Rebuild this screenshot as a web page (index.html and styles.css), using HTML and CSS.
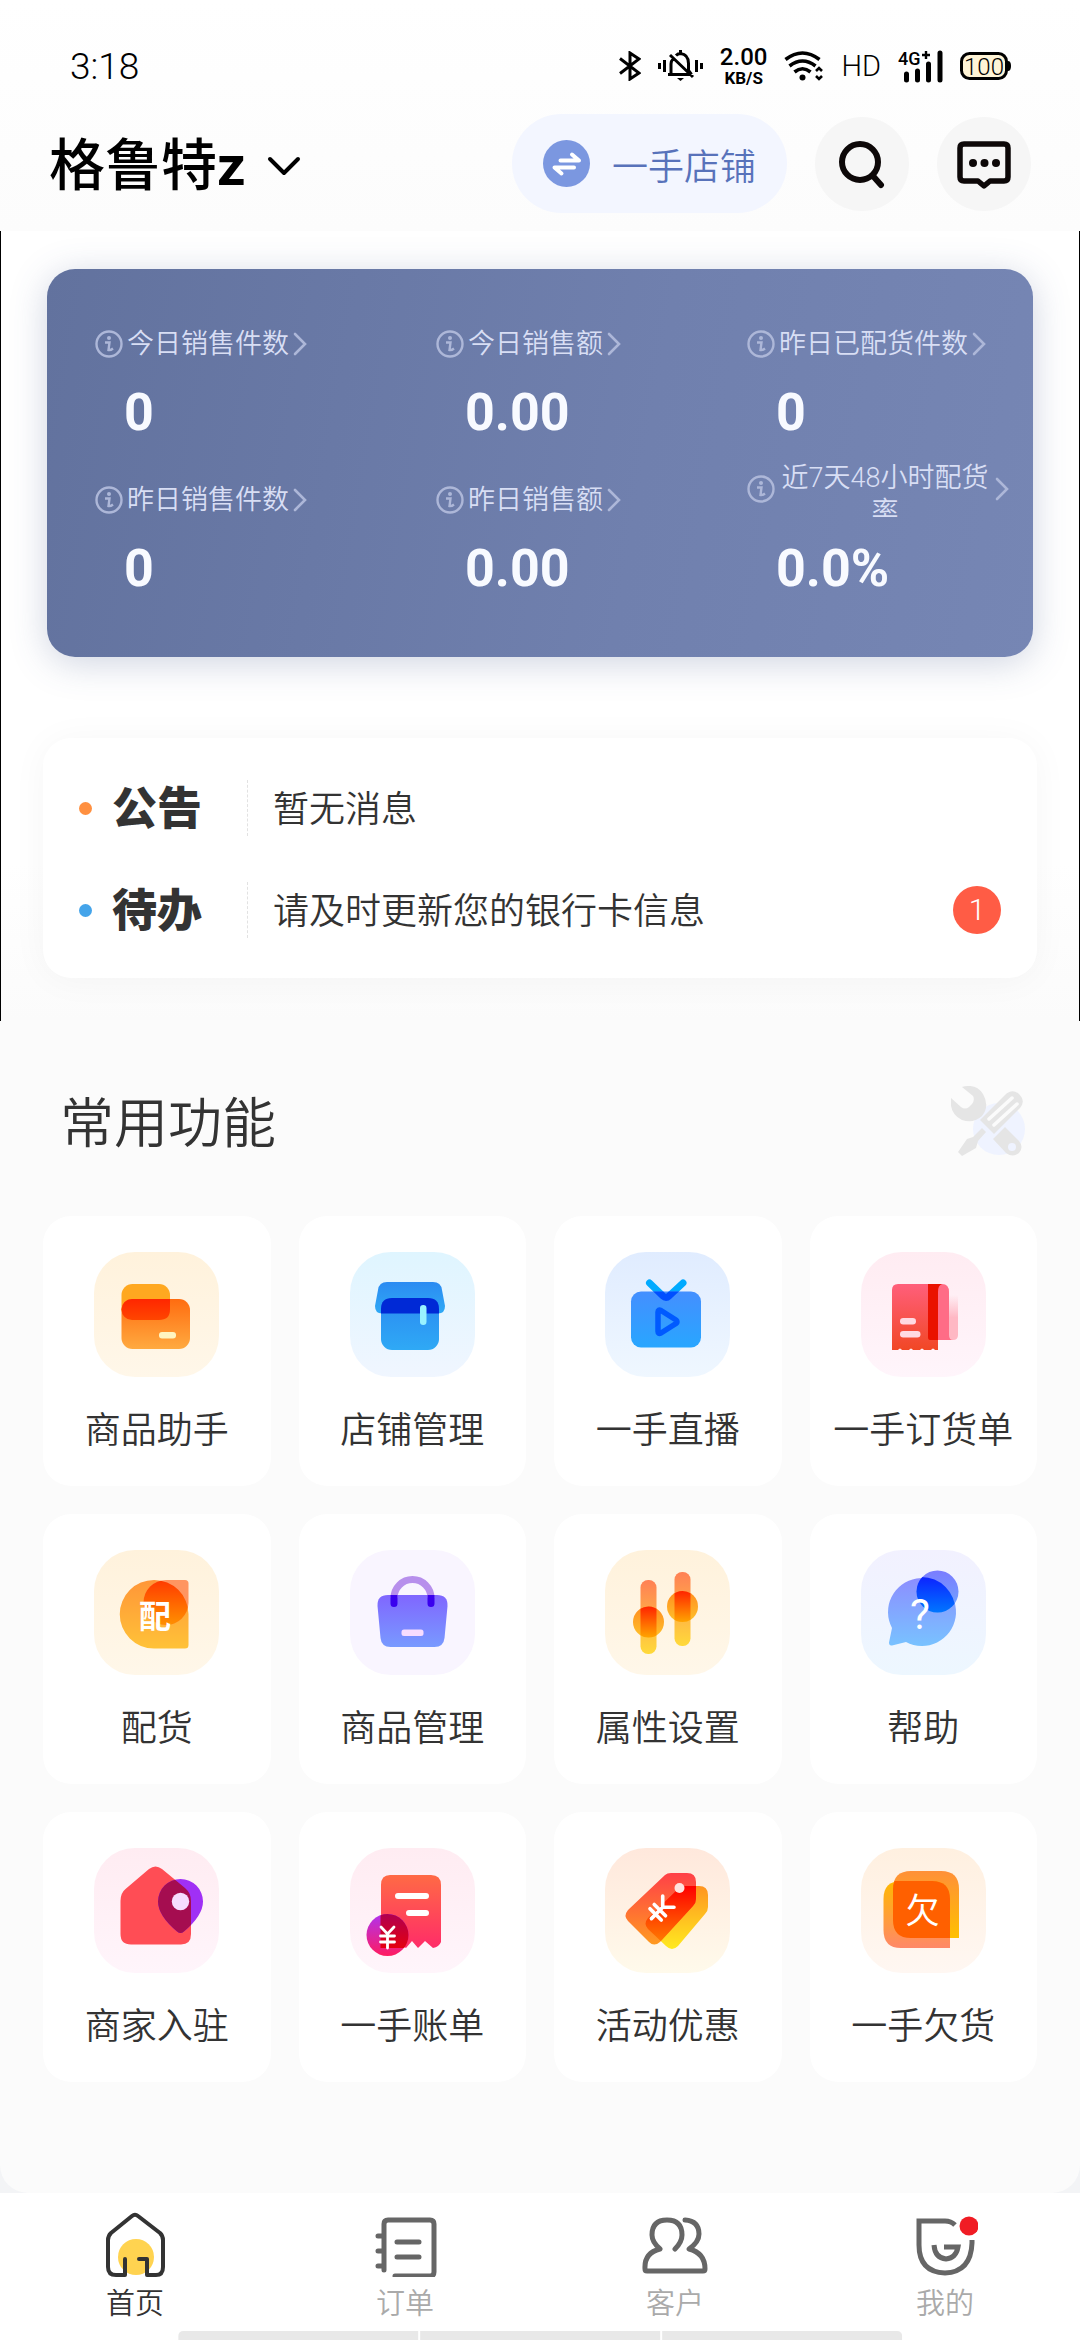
FILE: index.html
```html
<!DOCTYPE html>
<html lang="zh-CN">
<head>
    <meta charset="UTF-8">
    <meta name="viewport" content="width=device-width, initial-scale=1.0">
    <title>一手店铺</title>
    <link rel="stylesheet" href="styles.css">
</head>
<body>
    <header>
        <div class="status-bar">
            <span class="time">3:18</span>
            <div class="status-icons">
                <svg width="22" height="30" viewBox="0 0 22 30" fill="none" stroke="#000" stroke-width="3"><path d="M1 7.500 20 22l-9 6V2l9 6L1 22.500"/></svg>
                <svg width="45" height="32" viewBox="0 0 45 32" fill="none" stroke="#000" stroke-width="3"><path d="M1.500 13v6M6.500 10v12M38.500 10v12M43.500 13v6M10 24.500h23M13 23v-9q0-3 2-5M18 5.500q2-2 4.500-2 8 1 8 10v7l3 4M12 5l23 22M22.500 0v4"/><path d="M19 28h7l-3.500 3z" fill="#000" stroke="none"/></svg>
                <div class="speed"><b>2.00</b><span>KB/S</span></div>
                <svg width="40" height="32" viewBox="0 0 40 32" fill="none" stroke="#000" stroke-width="3.600"><path d="M1.500 9.500q17-13 34 0M5.500 16q13-10 26 0M10.500 22q8-6.500 16 0"/><circle cx="18.500" cy="27.500" r="3" fill="#000" stroke="none"/><path d="M32 21l3-3 3 3M32 26l3 3 3-3" stroke-width="2.600"/></svg>
                <span class="hd">HD</span>
                <svg width="45" height="40" viewBox="0 -4 45 40"><text x="0" y="15" class="net">4G</text><path d="M28 1v8M24 5h8" stroke="#000" stroke-width="2.400"/><path d="M8.500 24v6M19.500 21v9M30.500 14v16M42 3v27" stroke="#000" stroke-width="5" stroke-linecap="round"/></svg>
                <svg width="51" height="30" viewBox="0 0 51 30"><rect x="1.500" y="2.500" width="45" height="25" rx="8" fill="#fff4d6" stroke="#000" stroke-width="3"/><path d="M48 10q3 0 3 5t-3 5z"/><text x="24" y="24" class="battery">100</text></svg>
            </div>
        </div>
        <div class="top-bar">
            <button class="shop-name">格鲁特<b>z</b>
                <svg width="34" height="22" viewBox="0 0 34 22" fill="none" stroke="#000" stroke-width="4" stroke-linecap="round" stroke-linejoin="round"><path d="M3 4l14 14L31 4"/></svg>
            </button>
            <button class="switch">
                <svg width="47" height="47" viewBox="0 0 47 47"><circle cx="23.500" cy="23.500" r="23.500" fill="#7b97e0"/><path d="M17.500 20.500H36l-7-6M31 27.500H11.500l7 6" fill="none" stroke="#fff" stroke-width="4" stroke-linecap="round" stroke-linejoin="round"/></svg>
                一手店铺
            </button>
            <button class="round" aria-label="搜索">
                <svg width="50" height="50" viewBox="0 0 50 50" fill="none" stroke="#0d0808" stroke-width="6" stroke-linecap="round"><circle cx="23" cy="23" r="18"/><path d="M36 37l8 9"/></svg>
            </button>
            <button class="round" aria-label="消息">
                <svg width="56" height="50" viewBox="0 0 56 50" fill="none" stroke="#0d0808" stroke-width="5.500" stroke-linejoin="round"><path d="M8 5h40q4 0 4 4v29q0 4-4 4H34l-6 5-6-5H8q-4 0-4-4V9q0-4 4-4z"/><g fill="#0d0808" stroke="none"><circle cx="17" cy="24" r="4"/><circle cx="28.500" cy="24" r="4"/><circle cx="40" cy="24" r="4"/></g></svg>
            </button>
        </div>
    </header>

    <main>
        <!-- 图标复用 -->
        <svg class="defs" width="0" height="0">
            <symbol id="info" viewBox="0 0 28 28"><circle cx="14" cy="14" r="12.500" fill="none" stroke="currentColor" stroke-width="2.400"/><circle cx="14" cy="8" r="2" fill="currentColor"/><path d="M10 12.500h4.500L13.500 20q2 .5 4.500-1.500" fill="none" stroke="currentColor" stroke-width="2.400"/></symbol>
            <symbol id="more" viewBox="0 0 14 24"><path d="M2 2l10 10L2 22" fill="none" stroke="currentColor" stroke-width="2.600" stroke-linecap="round"/></symbol>
        </svg>

        <section class="overview">
            <div class="stats">
                <div class="stat">
                    <a href="#" class="stat-label"><svg class="info"><use href="#info"/></svg><span>今日销售件数</span><svg class="more"><use href="#more"/></svg></a>
                    <strong>0</strong>
                </div>
                <div class="stat">
                    <a href="#" class="stat-label"><svg class="info"><use href="#info"/></svg><span>今日销售额</span><svg class="more"><use href="#more"/></svg></a>
                    <strong>0.00</strong>
                </div>
                <div class="stat">
                    <a href="#" class="stat-label"><svg class="info"><use href="#info"/></svg><span>昨日已配货件数</span><svg class="more"><use href="#more"/></svg></a>
                    <strong>0</strong>
                </div>
                <div class="stat">
                    <a href="#" class="stat-label"><svg class="info"><use href="#info"/></svg><span>昨日销售件数</span><svg class="more"><use href="#more"/></svg></a>
                    <strong>0</strong>
                </div>
                <div class="stat">
                    <a href="#" class="stat-label"><svg class="info"><use href="#info"/></svg><span>昨日销售额</span><svg class="more"><use href="#more"/></svg></a>
                    <strong>0.00</strong>
                </div>
                <div class="stat">
                    <a href="#" class="stat-label"><svg class="info"><use href="#info"/></svg><span>近7天48小时配货率</span><svg class="more"><use href="#more"/></svg></a>
                    <strong>0.0%</strong>
                </div>
            </div>

            <div class="notices">
                <a href="#" class="notice">
                    <i class="dot orange"></i>
                    <b>公告</b>
                    <span class="notice-text">暂无消息</span>
                </a>
                <a href="#" class="notice">
                    <i class="dot blue"></i>
                    <b>待办</b>
                    <span class="notice-text">请及时更新您的银行卡信息</span>
                    <span class="badge">1</span>
                </a>
            </div>
        </section>

        <!-- 常用功能 -->
        <section class="functions">
            <div class="section-head">
                <h2>常用功能</h2>
                <svg width="75" height="70" viewBox="0 0 75 70">
                    <circle cx="48" cy="43" r="26" fill="#eff3ff"/>
                    <path d="M11 1Q25-3 32 8q7 12-1 22-9 8-20 4Q-2 28 0 12l10 9q4 3 8 0l3-3q3-4 1-8z" fill="#e5e5e5"/>
                    <path d="M29 34 54 9q7-7 14-1 7 7 1 14L43 48z" fill="#e5e5e5"/>
                    <path d="M38 33 61 12M43 39 66 18" stroke="#fbfbfb" stroke-width="3.500" stroke-linecap="round"/>
                    <path d="M31 42l4 4-8 9-2 7-14 8-4-4 9-13 6-2zM54 41l14 14q5 6 0 12-6 5-13 0L42 53z" fill="#e5e5e5"/>
                    <circle cx="61" cy="61" r="4" fill="#eff3ff"/>
                </svg>
            </div>

            <div class="grid">
                <a href="#" class="tile">
                    <svg class="tile-icon" viewBox="0 0 125 125">
                        <defs><linearGradient id="a1" x2="0" y2="1"><stop stop-color="#fff2dc"/><stop offset="1" stop-color="#fff7e9"/></linearGradient><linearGradient id="a2" x2="0" y2="1"><stop stop-color="#ff6c10"/><stop offset="1" stop-color="#ffaa40"/></linearGradient><linearGradient id="a3" x2="0" y2="1"><stop stop-color="#ff2600"/><stop offset="1" stop-color="#ff4600"/></linearGradient></defs>
                        <rect width="125" height="125" rx="41" fill="url(#a1)"/>
                        <rect x="27.500" y="32" width="48.500" height="36" rx="11" fill="#ffa820"/>
                        <rect x="27.500" y="47" width="68.500" height="50" rx="11" fill="url(#a2)"/>
                        <path d="M38 47h38v10.500q0 10.500-11 10.500H38a10.500 10.500 0 0 1 0-21z" fill="url(#a3)"/>
                        <rect x="65" y="80" width="17" height="6.500" rx="3" fill="#fff5c0"/>
                    </svg>
                    <span>商品助手</span>
                </a>
                <a href="#" class="tile">
                    <svg class="tile-icon" viewBox="0 0 125 125">
                        <defs><linearGradient id="b1" x2="0" y2="1"><stop stop-color="#dff5ff"/><stop offset="1" stop-color="#f0f6ff"/></linearGradient><linearGradient id="b2" x2="0" y2="1"><stop stop-color="#2b8bf2"/><stop offset="1" stop-color="#2fa9f5"/></linearGradient></defs>
                        <rect width="125" height="125" rx="41" fill="url(#b1)"/>
                        <path d="M37 30h46q8 0 9 8l3 16q0 7.500-7 7.500H32q-7 0-7-7.500l3-16q1-8 9-8z" fill="url(#b2)"/>
                        <rect x="31" y="46" width="58" height="52" rx="11" fill="url(#b2)"/>
                        <path d="M31 61.500V57q0-11 11-11h36q11 0 11 11v4.500z" fill="#0029d6"/>
                        <rect x="70" y="53" width="6.500" height="20" rx="3.200" fill="#98f2ff"/>
                    </svg>
                    <span>店铺管理</span>
                </a>
                <a href="#" class="tile">
                    <svg class="tile-icon" viewBox="0 0 125 125">
                        <defs><linearGradient id="c1" x2="0" y2="1"><stop stop-color="#e0ecff"/><stop offset="1" stop-color="#eff7ff"/></linearGradient><linearGradient id="c2" x2="0" y2="1"><stop stop-color="#448fff"/><stop offset="1" stop-color="#28a6ff"/></linearGradient><clipPath id="c3"><rect x="26" y="39.500" width="70" height="56" rx="10"/></clipPath></defs>
                        <rect width="125" height="125" rx="41" fill="url(#c1)"/>
                        <path d="M44.500 31 58 44q3 3 6 0l14-13" fill="none" stroke="#00aaff" stroke-width="7" stroke-linecap="round"/>
                        <rect x="26" y="39.500" width="70" height="56" rx="10" fill="url(#c2)"/>
                        <path d="M44.500 31 58 44q3 3 6 0l14-13" fill="none" stroke="#004fff" stroke-width="7" clip-path="url(#c3)"/>
                        <path d="M53 60q0-3 3-1.500L71 68q2 2 0 3.500L56 81q-3 1.500-3-1.500z" fill="none" stroke="#005aff" stroke-width="5.500" stroke-linejoin="round"/>
                    </svg>
                    <span>一手直播</span>
                </a>
                <a href="#" class="tile">
                    <svg class="tile-icon" viewBox="0 0 125 125">
                        <defs><linearGradient id="d1" x2="0" y2="1"><stop stop-color="#ffecf2"/><stop offset="1" stop-color="#fff5fb"/></linearGradient><linearGradient id="d2" x2="0" y2="1"><stop stop-color="#ff5f7b"/><stop offset="1" stop-color="#f14725"/></linearGradient><linearGradient id="d3" x2="0" y2="1"><stop stop-color="#ffb8c4" stop-opacity="0"/><stop offset=".5" stop-color="#ffb8c4"/></linearGradient></defs>
                        <rect width="125" height="125" rx="41" fill="url(#d1)"/>
                        <path d="M87.500 43H97v40q0 5-5 5h-8z" fill="url(#d3)"/>
                        <path d="M67 32h14q7 0 7 8v43q0 5 4 5H67z" fill="#ff6c86"/>
                        <path d="M31 38q0-6 6-6h40v66h-3q-2-3-4 0h-7q-2-3-4 0h-7q-2-3-4 0h-7q-2-3-4 0h-6z" fill="url(#d2)"/>
                        <path d="M67 32h14q-4 1-4 8v48h-8q-2 0-2-3z" fill="#ea1200"/>
                        <rect x="39" y="66" width="16" height="6.500" rx="3.200" fill="#ffd9e2"/>
                        <rect x="39" y="79" width="20.500" height="6.500" rx="3.200" fill="#ffd9e2"/>
                    </svg>
                    <span>一手订货单</span>
                </a>
                <a href="#" class="tile">
                    <svg class="tile-icon" viewBox="0 0 125 125">
                        <defs><linearGradient id="e2" x2="0" y2="1"><stop stop-color="#ff9638"/><stop offset="1" stop-color="#ffc238"/></linearGradient><linearGradient id="e3" x2="0" y2="1"><stop stop-color="#ff3a00"/><stop offset="1" stop-color="#ff9000"/></linearGradient><clipPath id="e4"><path d="M60 30a34.300 34.300 0 0 1 34.500 34v31q0 3.500-3.500 3.500H60A34 34 0 0 1 60 30z"/></clipPath></defs>
                        <rect width="125" height="125" rx="41" fill="url(#a1)"/>
                        <path d="M60 30a34.300 34.300 0 0 1 34.500 34v31q0 3.500-3.500 3.500H60A34 34 0 0 1 60 30z" fill="url(#e2)"/>
                        <path d="M72 30h19q3.500 0 3.500 3.500V53A22.500 22.500 0 1 1 72 30z" fill="#ff9560"/>
                        <path d="M72 30h19q3.500 0 3.500 3.500V53A22.500 22.500 0 1 1 72 30z" fill="url(#e3)" clip-path="url(#e4)"/>
                        <text x="61" y="78" class="glyph bold">配</text>
                    </svg>
                    <span>配货</span>
                </a>
                <a href="#" class="tile">
                    <svg class="tile-icon" viewBox="0 0 125 125">
                        <defs><linearGradient id="f2" x2="0" y2="1"><stop stop-color="#8066ff"/><stop offset="1" stop-color="#789aff"/></linearGradient></defs>
                        <rect width="125" height="125" rx="41" fill="#f9f5ff"/>
                        <path d="M38 45h49q11 0 10.500 11L94.500 88q-1 9-10 9h-44q-9 0-10-9L27.500 56Q27 45 38 45z" fill="url(#f2)"/>
                        <path d="M44 48a18.500 18.500 0 0 1 37 0" fill="none" stroke="#b78fec" stroke-width="7"/>
                        <path d="M40.500 45h7v8.500a3.500 3.500 0 0 1-7 0zM77.500 45h7v8.500a3.500 3.500 0 0 1-7 0z" fill="#3a00ee"/>
                        <rect x="51.500" y="79.500" width="22" height="6.500" rx="2.500" fill="#f8dcff"/>
                    </svg>
                    <span>商品管理</span>
                </a>
                <a href="#" class="tile">
                    <svg class="tile-icon" viewBox="0 0 125 125">
                        <defs><linearGradient id="g2" x2="0" y2="1"><stop stop-color="#ff8055"/><stop offset="1" stop-color="#ffda3a"/></linearGradient><linearGradient id="g3" x2="0" y2="1"><stop stop-color="#ff8c20"/><stop offset="1" stop-color="#ffc22a"/></linearGradient><linearGradient id="g4" x2="0" y2="1"><stop stop-color="#ff2400"/><stop offset="1" stop-color="#ffa400"/></linearGradient><clipPath id="g5"><rect x="35.500" y="30" width="16" height="74"/><rect x="69.500" y="22" width="16" height="74"/></clipPath></defs>
                        <rect width="125" height="125" rx="41" fill="url(#a1)"/>
                        <rect x="35.500" y="30" width="16" height="74" rx="7.500" fill="url(#g2)"/>
                        <rect x="69.500" y="22" width="16" height="74" rx="7.500" fill="url(#g2)"/>
                        <circle cx="43.500" cy="72" r="15.500" fill="url(#g3)"/>
                        <circle cx="77.500" cy="56.500" r="15.500" fill="url(#g3)"/>
                        <g clip-path="url(#g5)" fill="url(#g4)"><circle cx="43.500" cy="72" r="15.500"/><circle cx="77.500" cy="56.500" r="15.500"/></g>
                    </svg>
                    <span>属性设置</span>
                </a>
                <a href="#" class="tile">
                    <svg class="tile-icon" viewBox="0 0 125 125">
                        <defs><linearGradient id="h1" x2="0" y2="1"><stop stop-color="#f2f1ff"/><stop offset="1" stop-color="#edf7ff"/></linearGradient><linearGradient id="h2" x2="0" y2="1"><stop stop-color="#8c8eff"/><stop offset="1" stop-color="#78c2ff"/></linearGradient><linearGradient id="h3" x2="0" y2="1"><stop stop-color="#7a7cff"/><stop offset="1" stop-color="#70a8ff"/></linearGradient><linearGradient id="h4" x2="0" y2="1"><stop stop-color="#0f14ff"/><stop offset="1" stop-color="#0076ff"/></linearGradient><clipPath id="h5"><circle cx="60.500" cy="61" r="34"/></clipPath></defs>
                        <rect width="125" height="125" rx="41" fill="url(#h1)"/>
                        <path d="M31 78a34 34 0 1 1 14 14l-14 3.500q-3 .5-3-3z" fill="url(#h2)"/>
                        <circle cx="76.500" cy="41.500" r="21" fill="url(#h3)"/>
                        <circle cx="76.500" cy="41.500" r="21" fill="url(#h4)" clip-path="url(#h5)"/>
                        <text x="59" y="79" class="glyph ask">?</text>
                    </svg>
                    <span>帮助</span>
                </a>
                <a href="#" class="tile">
                    <svg class="tile-icon" viewBox="0 0 125 125">
                        <defs><clipPath id="i2"><path d="M55 21q6.500-5 13 0l23 19q6 5 6 13v33q0 10.500-10 10.500H37Q26.500 96.500 26.500 86V53q0-8 5-12z"/></clipPath></defs>
                        <rect width="125" height="125" rx="41" fill="url(#d1)"/>
                        <path d="M55 21q6.500-5 13 0l23 19q6 5 6 13v33q0 10.500-10 10.500H37Q26.500 96.500 26.500 86V53q0-8 5-12z" fill="#ff4d55"/>
                        <path d="M86.500 31a22.500 22.500 0 0 1 22.500 22.500q0 14-19 30-3.500 3-7 0-19-16-19-30A22.500 22.500 0 0 1 86.500 31z" fill="#a030f5"/>
                        <path d="M86.500 31a22.500 22.500 0 0 1 22.500 22.500q0 14-19 30-3.500 3-7 0-19-16-19-30A22.500 22.500 0 0 1 86.500 31z" fill="#a50d50" clip-path="url(#i2)"/>
                        <circle cx="86.500" cy="53.500" r="8.700" fill="#f6dcff"/>
                    </svg>
                    <span>商家入驻</span>
                </a>
                <a href="#" class="tile">
                    <svg class="tile-icon" viewBox="0 0 125 125">
                        <defs><linearGradient id="j2" x2="0" y2="1"><stop stop-color="#ff6a45"/><stop offset="1" stop-color="#ff2c68"/></linearGradient><linearGradient id="j3" x2="0" y2="1"><stop stop-color="#b032f0"/><stop offset="1" stop-color="#ff1c60"/></linearGradient><linearGradient id="j4" x2="0" y2="1"><stop stop-color="#b00050"/><stop offset="1" stop-color="#f00000"/></linearGradient><clipPath id="j5"><path d="M30.500 27H91v73H30.500z"/></clipPath></defs>
                        <rect width="125" height="125" rx="41" fill="url(#d1)"/>
                        <path d="M40 27h41q10 0 10 10v57q-2 5-8 6l-8-7-7 7-6-7-6 7-8-5-17-3V37q0-10 9-10z" fill="url(#j2)"/>
                        <path d="M48 48h28M59 65h17" stroke="#fff" stroke-width="6" stroke-linecap="round"/>
                        <circle cx="37.500" cy="87" r="21" fill="url(#j3)"/>
                        <circle cx="37.500" cy="87" r="21" fill="url(#j4)" clip-path="url(#j5)"/>
                        <path d="M31 79l6.500 7 6.500-7M37.500 86v14M30.500 88h14M30.500 94h14" fill="none" stroke="#fff" stroke-width="2.800" stroke-linecap="round"/>
                    </svg>
                    <span>一手账单</span>
                </a>
                <a href="#" class="tile">
                    <svg class="tile-icon" viewBox="0 0 125 125">
                        <defs><linearGradient id="k1" x2="0" y2="1"><stop stop-color="#ffe8dc"/><stop offset="1" stop-color="#fffaeb"/></linearGradient><linearGradient id="k2" x2="0" y2="1"><stop stop-color="#ff9420"/><stop offset="1" stop-color="#ffea20"/></linearGradient><linearGradient id="k3" x2="0" y2="1"><stop stop-color="#ff4048"/><stop offset="1" stop-color="#ff9a20"/></linearGradient><linearGradient id="k4" x2="0" y2="1"><stop stop-color="#ff0000"/><stop offset="1" stop-color="#ff8a00"/></linearGradient><clipPath id="k5"><path d="M60 27q2-2 6-2h16q9 0 9 9v17q0 4-3 7L55 94q-6 5-11 0L23 73q-5-5 0-11z"/></clipPath></defs>
                        <rect width="125" height="125" rx="41" fill="url(#k1)"/>
                        <path d="M74 40q2-2 6-2h14q9 0 9 9v12q0 4-3 7L73 98q-6 6-12 0L43 81q-5-5 0-11z" fill="url(#k2)"/>
                        <path d="M60 27q2-2 6-2h16q9 0 9 9v17q0 4-3 7L55 94q-6 5-11 0L23 73q-5-5 0-11z" fill="url(#k3)"/>
                        <path d="M74 40q2-2 6-2h14q9 0 9 9v12q0 4-3 7L73 98q-6 6-12 0L43 81q-5-5 0-11z" fill="url(#k4)" clip-path="url(#k5)"/>
                        <circle cx="74.500" cy="40" r="5" fill="#ffe3df"/>
                        <path d="M-8-9 0-1l8-8M0-1v16M-8 3H8M-8 9H8" transform="translate(57 60) rotate(45)" fill="none" stroke="#fff" stroke-width="3.600" stroke-linecap="round"/>
                    </svg>
                    <span>活动优惠</span>
                </a>
                <a href="#" class="tile">
                    <svg class="tile-icon" viewBox="0 0 125 125">
                        <defs><linearGradient id="l1" x2="0" y2="1"><stop stop-color="#fff0e0"/><stop offset="1" stop-color="#fff7f2"/></linearGradient><linearGradient id="l2" x2="0" y2="1"><stop stop-color="#ff9038"/><stop offset="1" stop-color="#ffc000"/></linearGradient><linearGradient id="l3" x2="0" y2="1"><stop stop-color="#ffb800"/><stop offset="1" stop-color="#ff8868"/></linearGradient></defs>
                        <rect width="125" height="125" rx="41" fill="url(#l1)"/>
                        <path d="M50 23h30q18 0 18 18v49H50q-18 0-18-18V41q0-18 18-18z" fill="url(#l2)"/>
                        <path d="M40 33h31q18 0 18 18v49H40q-17.500 0-17.500-18V51q0-18 17.500-18z" fill="url(#l3)"/>
                        <path d="M33.500 33H71q18 0 18 18v39H50q-18 0-18-18V41q0-5 1.500-8z" fill="#ff6000"/>
                        <text x="61.500" y="75" class="glyph">欠</text>
                    </svg>
                    <span>一手欠货</span>
                </a>
            </div>
        </section>
    </main>

    <nav>
        <a href="#" class="active">
            <svg width="64" height="66" viewBox="0 0 64 66" fill="none" stroke="#333" stroke-width="4" stroke-linecap="round" stroke-linejoin="round"><ellipse cx="33" cy="46" rx="18" ry="18" fill="#ffd350" stroke="none"/><path d="M22 48v16h-9q-8 0-8-8V29q0-4 3-7L29 5q3-2.500 6 0l22 17q3 3 3 7v27q0 8-7 8h-9V48h-8"/></svg>
            <span>首页</span>
        </a>
        <a href="#">
            <svg width="64" height="66" viewBox="0 0 64 66" fill="none" stroke="#666" stroke-width="5" stroke-linecap="round" stroke-linejoin="round"><path d="M11 59V13q0-4 4-4h42q4 0 4 4v48q0 4-4 4H22M5 25h6M5 40h6M5 55h6M24 31h22M24 46h22"/></svg>
            <span>订单</span>
        </a>
        <a href="#">
            <svg width="66" height="66" viewBox="0 0 66 66" fill="none" stroke="#666" stroke-width="5" stroke-linecap="round" stroke-linejoin="round"><path d="M33 38Q40 31 40 24 40 9 25 9T10 24q0 7 8 14Q2 42 3 58q0 2 2 2h56q2 0 2-2 0-16-16-20 10-7 10-15 0-13-14-14"/></svg>
            <span>客户</span>
        </a>
        <a href="#">
            <svg width="66" height="66" viewBox="0 0 66 66" fill="none" stroke="#666" stroke-width="5"><path d="M43 14q-4-4-10-4H7v24q0 27 26 28 26-1 27-30V29M22 34q1 13 12 14 10-1 12-12H32"/><circle cx="57" cy="15" r="9.500" fill="#f01c24" stroke="none"/></svg>
            <span>我的</span>
        </a>
        <div class="home-bar"><i></i><i></i><i></i></div>
    </nav>
</body>
</html>
```
FILE: styles.css
```css
* {
    box-sizing: border-box;
}

body {
    margin: 0;
    min-height: 100vh;
    display: flex;
    flex-direction: column;
    font-family: Roboto, 'Noto Sans CJK SC', sans-serif;
    font-weight: 350;
    color: #333;
    background: #f3f4f6;
}

a {
    color: inherit;
    text-decoration: none;
}

button {
    border: none;
    padding: 0;
    font: inherit;
    color: inherit;
    cursor: pointer;
}

svg {
    display: block;
    flex-shrink: 0;
}

.defs {
    position: absolute;
}

header {
    padding: 46px 49px 18px;
    background: linear-gradient(#fff, #fcfcfc);
}

.status-bar {
    display: flex;
    align-items: center;
    justify-content: space-between;
    height: 40px;
    padding: 0 20px 0 21px;
    color: #000;
}

.time {
    font-size: 37px;
}

.status-icons {
    display: flex;
    align-items: center;
    gap: 17px;
}

.speed {
    display: flex;
    flex-direction: column;
    align-items: center;
    font-size: 17px;
    line-height: 18px;
    font-weight: 700;
}

.speed b {
    font-size: 24px;
    line-height: 24px;
    font-weight: 500;
}

.hd {
    font-size: 29px;
    line-height: 40px;
}

.net {
    font-size: 18px;
    font-weight: 500;
}

.battery {
    font-size: 24px;
    text-anchor: middle;
}

.top-bar {
    display: flex;
    align-items: center;
    gap: 28px;
    margin-top: 28px;
}

.shop-name {
    display: flex;
    align-items: center;
    margin-right: auto;
    padding-top: 4px;
    font-size: 56px;
    font-weight: 500;
    line-height: 80px;
    color: #000;
    background: none;
}

.shop-name svg {
    margin-left: 21px;
}

.switch {
    display: flex;
    align-items: center;
    gap: 22px;
    height: 99px;
    padding: 0 31px;
    font-size: 36px;
    color: #5872ba;
    background: #f3f6ff;
    border-radius: 50px;
}

.round {
    display: flex;
    align-items: center;
    justify-content: center;
    width: 94px;
    height: 94px;
    background: #f6f6f6;
    border-radius: 50%;
}

main {
    flex: 1;
    background: #fbfbfb;
    border-radius: 0 0 28px 28px;
}

/* 数据概览 */
.overview {
    padding: 38px 42px 43px;
    background: linear-gradient(#fff 80%, #fbfbfb);
    border: solid #000;
    border-width: 0 1px;
}

.stats {
    display: grid;
    grid-template-columns: 341fr 311fr 286fr;
    row-gap: 18px;
    margin: 0 4px;
    padding: 36px 0 58px 48px;
    color: #d8def4;
    background: linear-gradient(100deg, #62729e, #7080ae 60%, #7686b4);
    border-radius: 28px;
    box-shadow: 0 6px 36px rgba(70, 90, 140, 0.26);
}

.stat {
    display: flex;
    flex-direction: column;
    justify-content: flex-end;
    height: 138px;
}

.stat-label {
    display: flex;
    align-items: center;
    gap: 4px;
    max-width: 262px;
    max-height: 56px;
    font-size: 27px;
    line-height: 34px;
    text-align: center;
    overflow: hidden;
}

.stat-label span {
    max-height: 56px;
}

.info {
    width: 28px;
    height: 28px;
    color: #adb7d8;
}

.more {
    width: 14px;
    height: 24px;
    color: #adb7d8;
}

.stat strong {
    margin-top: 22px;
    padding-left: 29px;
    font-size: 52px;
    line-height: 60px;
    font-weight: 700;
    color: #f8faff;
}

/* 公告待办 */
.notices {
    margin-top: 81px;
    padding: 19px 36px 17px;
    background: #fff;
    border-radius: 28px;
    box-shadow: 0 2px 36px rgba(0, 0, 0, 0.04);
}

.notice {
    display: flex;
    align-items: center;
    height: 102px;
    font-size: 36px;
}

.dot {
    width: 13px;
    height: 13px;
    margin-right: 20px;
    border-radius: 50%;
}

.orange {
    background: #ff9040;
}

.blue {
    background: #44a4ea;
}

.notice b {
    width: 136px;
    padding-top: 4px;
    font-size: 45px;
    line-height: 52px;
    font-weight: 900;
    border-right: 1px dashed #e2e2e2;
}

.notice-text {
    flex: 1;
    padding: 0 0 4px 25px;
}

.badge {
    width: 48px;
    height: 48px;
    font-size: 30px;
    line-height: 48px;
    text-align: center;
    color: #fff;
    background: #ff5c45;
    border-radius: 50%;
}

.functions {
    padding: 65px 43px 111px;
}

.section-head {
    display: flex;
    align-items: center;
    justify-content: space-between;
    padding: 0 11px 0 17px;
}

h2 {
    margin: 0;
    padding-top: 8px;
    font-size: 54px;
    line-height: 62px;
    font-weight: 350;
}

.grid {
    display: grid;
    grid-template-columns: repeat(4, 1fr);
    gap: 28px;
    margin-top: 60px;
}

.tile {
    display: flex;
    flex-direction: column;
    align-items: center;
    gap: 28px;
    height: 270px;
    padding-top: 36px;
    font-size: 36px;
    line-height: 52px;
    background: #fff;
    border-radius: 28px;
}

.tile-icon {
    width: 125px;
    height: 125px;
}

.glyph {
    font-size: 34px;
    font-weight: 400;
    fill: #fff;
    text-anchor: middle;
}

.bold {
    font-size: 32px;
    font-weight: 700;
}

.ask {
    font-size: 42px;
}

nav {
    position: relative;
    display: flex;
    height: 147px;
    padding-top: 18px;
    background: #fff;
}

nav a {
    flex: 1;
    display: flex;
    flex-direction: column;
    align-items: center;
    gap: 2px;
    font-size: 29px;
    line-height: 50px;
    color: #aaa;
}

nav .active {
    color: #333;
}

/* 系统手势条 */
.home-bar {
    position: absolute;
    left: 50%;
    bottom: 0;
    display: flex;
    gap: 2px;
    width: 67%;
    height: 9px;
    transform: translateX(-50%);
    border-radius: 5px 5px 0 0;
    overflow: hidden;
}

.home-bar i {
    flex: 1;
    background: #e8e8e8;
}
```
